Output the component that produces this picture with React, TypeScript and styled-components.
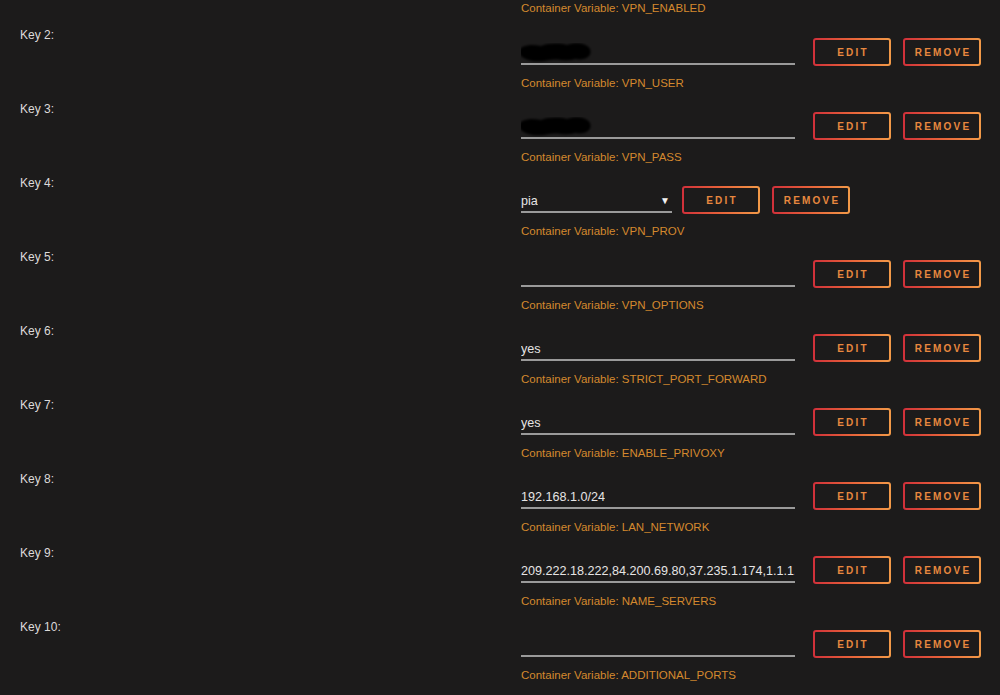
import React from "react";
import styled, { createGlobalStyle } from "styled-components";

const GlobalStyle = createGlobalStyle`
  html, body {
    margin: 0;
    padding: 0;
    background: #1c1b1b;
    overflow: hidden;
  }
  body {
    font-family: "Liberation Sans", "Noto Sans", sans-serif;
    color: #e2e0e0;
  }
`;

const Page = styled.div`
  width: 1000px;
  height: 695px;
  overflow: hidden;
  background: #1c1b1b;
`;

const Row = styled.div<{ $tail?: boolean }>`
  display: grid;
  grid-template-columns: 521px 1fr;
  height: ${(p) => (p.$tail ? 27 : 74)}px;
`;

const Label = styled.div`
  padding-left: 20px;
  font-size: 12px;
  line-height: 16px;
  color: #dcdada;
`;

const Field = styled.div`
  display: flex;
  flex-direction: column;
`;

const Controls = styled.div`
  display: flex;
  align-items: flex-end;
  margin-top: 10px;
  height: 28px;
`;

const TextBox = styled.div<{ $width: number; $gap: number }>`
  position: relative;
  box-sizing: border-box;
  width: ${(p) => p.$width}px;
  flex: none;
  margin-right: ${(p) => p.$gap}px;
  height: 22px;
  padding-top: 2px;
  border-bottom: 2px solid #9a9a9a;
  font-size: 12.6px;
  line-height: 16px;
  color: #e6e4e4;
  white-space: nowrap;
  overflow: hidden;
  display: flex;
  justify-content: space-between;
`;

const Value = styled.span`
  min-width: 0;
  overflow: hidden;
  text-overflow: clip;
`;

const Arrow = styled.span`
  font-size: 10px;
  color: #f2f2f2;
  padding-right: 2px;
`;

const Scribble = styled.svg`
  position: absolute;
  left: -6px;
  top: -3px;
`;

const ActionButton = styled.button<{ $gap?: number }>`
  box-sizing: border-box;
  width: 78px;
  height: 28px;
  flex: none;
  margin-left: ${(p) => p.$gap ?? 0}px;
  margin-bottom: -1px;
  border: 2px solid transparent;
  border-radius: 3px;
  background:
    linear-gradient(#1c1b1b, #1c1b1b) padding-box,
    linear-gradient(90deg, #d0303a 0%, #e8633a 50%, #f29a48 100%) border-box;
  color: #e8883f;
  font-family: "Liberation Sans", sans-serif;
  font-size: 10px;
  font-weight: bold;
  letter-spacing: 2.2px;
  text-indent: 2px;
  padding: 0;
  cursor: pointer;
`;

const Hint = styled.div<{ $tail?: boolean }>`
  margin-top: ${(p) => (p.$tail ? 0 : 10)}px;
  font-size: 11.5px;
  line-height: 16px;
  color: #d4892e;
`;

type Entry = {
  key: number;
  value: string;
  name: string;
  select?: boolean;
  hidden?: boolean;
};

const entries: Entry[] = [
  { key: 2, value: "", name: "VPN_USER", hidden: true },
  { key: 3, value: "", name: "VPN_PASS", hidden: true },
  { key: 4, value: "pia", name: "VPN_PROV", select: true },
  { key: 5, value: "", name: "VPN_OPTIONS" },
  { key: 6, value: "yes", name: "STRICT_PORT_FORWARD" },
  { key: 7, value: "yes", name: "ENABLE_PRIVOXY" },
  { key: 8, value: "192.168.1.0/24", name: "LAN_NETWORK" },
  {
    key: 9,
    value: "209.222.18.222,84.200.69.80,37.235.1.174,1.1.1.1,1.0.0.1",
    name: "NAME_SERVERS",
  },
  { key: 10, value: "", name: "ADDITIONAL_PORTS" },
];

// blacked-out credential
const Redacted: React.FC = () => (
  <Scribble width="84" height="26" viewBox="0 0 84 26">
    <defs>
      <filter id="soft" x="-10%" y="-30%" width="120%" height="160%">
        <feGaussianBlur stdDeviation="1.1" />
      </filter>
    </defs>
    <path
      d="M4 12 C5 5 16 4 26 6 C34 3 44 3 52 5 C60 2 72 3 75 9 C78 16 70 21 60 19 C52 22 42 18 34 20 C22 23 6 21 4 12 Z"
      fill="#040404"
      filter="url(#soft)"
    />
  </Scribble>
);

const VarRow: React.FC<{ entry: Entry }> = ({ entry }) => (
  <Row>
    <Label>Key {entry.key}:</Label>
    <Field>
      <Controls>
        <TextBox
          $width={entry.select ? 151 : 274}
          $gap={entry.select ? 10 : 18}
        >
          <Value>{entry.value}</Value>
          {entry.hidden && <Redacted />}
          {entry.select && <Arrow>▼</Arrow>}
        </TextBox>
        <ActionButton>EDIT</ActionButton>
        <ActionButton $gap={12}>REMOVE</ActionButton>
      </Controls>
      <Hint>Container Variable: {entry.name}</Hint>
    </Field>
  </Row>
);

const App: React.FC = () => {
  return (
    <Page>
      <GlobalStyle />
      <Row $tail>
        <div />
        <Hint $tail>Container Variable: VPN_ENABLED</Hint>
      </Row>
      {entries.map((e) => (
        <VarRow key={e.key} entry={e} />
      ))}
    </Page>
  );
};

export default App;
